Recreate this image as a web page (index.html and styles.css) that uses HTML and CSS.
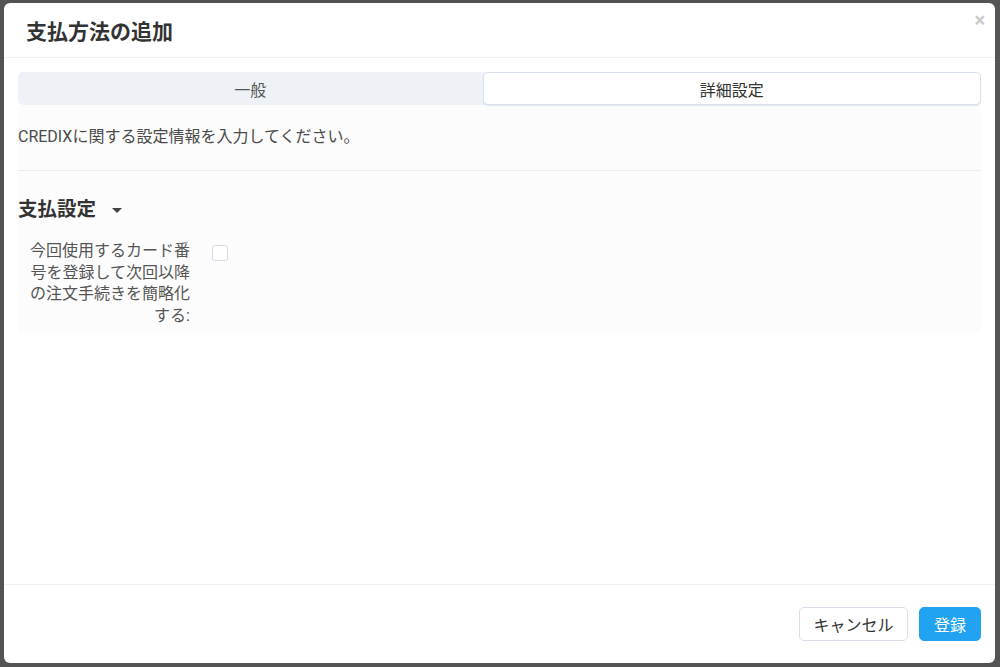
FILE: index.html
```html
<!DOCTYPE html>
<html lang="ja">
<head>
    <meta charset="UTF-8">
    <title>支払方法の追加</title>
    <link rel="stylesheet" href="styles.css">
</head>
<body>
    <div class="modal">
        <div class="modal-header">
            <h1 class="modal-title">支払方法の追加</h1>
            <span class="modal-close">&times;</span>
        </div>

        <div class="modal-body">
            <div class="tabs">
                <div class="tab">一般</div>
                <div class="tab active">詳細設定</div>
            </div>

            <div class="panel">
                <p class="description">CREDIXに関する設定情報を入力してください。</p>
                <hr class="divider">

                <h2 class="section-title">支払設定 <span class="caret"></span></h2>

                <div class="form-row">
                    <label class="form-label" for="saveCard">今回使用するカード番号を登録して次回以降の注文手続きを簡略化する:</label>
                    <input type="checkbox" class="form-check" id="saveCard">
                </div>
            </div>
        </div>

        <div class="modal-footer">
            <button class="btn btn-default">キャンセル</button>
            <button class="btn btn-primary">登録</button>
        </div>
    </div>
</body>
</html>
```

FILE: styles.css
```css
html, body {
    height: 100%;
}

body {
    margin: 0;
    padding: 3px 5px 4px 4px;
    box-sizing: border-box;
    background: #545454;
    font-family: Roboto, "Noto Sans CJK JP", sans-serif;
    color: #444;
}

.modal {
    height: 100%;
    background: #fff;
    border-radius: 6px;
    display: flex;
    flex-direction: column;
}

.modal-header {
    position: relative;
    height: 54px;
    padding: 0 22px;
    border-bottom: 1px solid #f0f0f0;
    display: flex;
    align-items: center;
}

.modal-title {
    margin: 0;
    font-size: 21px;
    font-weight: bold;
    color: #333;
}

.modal-close {
    position: absolute;
    top: 5px;
    right: 10px;
    font-size: 20px;
    font-weight: bold;
    color: #c8c8c8;
}

.modal-body {
    flex: 1;
    padding: 14px 14px 0 14px;
}

.tabs {
    display: flex;
    background: #eef2f7;
    border-radius: 5px;
    height: 33px;
}

.tab {
    flex: auto;
    display: flex;
    align-items: center;
    justify-content: center;
    font-size: 16px;
    color: #555;
    border-radius: 5px;
}

.tab.active {
    background: #fff;
    border: 1px solid #d9e1ee;
    box-shadow: 0 1px 1px rgba(150, 165, 190, 0.25);
    color: #333;
}

.panel {
    background: #fcfcfc;
    padding-bottom: 6px;
}

.description {
    margin: 0;
    padding: 22px 0 0 0;
    font-size: 16px;
    line-height: 20px;
    color: #4a4a4a;
}

.divider {
    border: none;
    border-top: 1px solid #ececec;
    margin: 23px 0 0 0;
}

.section-title {
    margin: 27px 0 0 0;
    font-size: 19.5px;
    font-weight: bold;
    color: #333;
    display: flex;
    align-items: center;
    line-height: 24px;
}

.caret {
    display: inline-block;
    width: 0;
    height: 0;
    margin-left: 16px;
    border-left: 5px solid transparent;
    border-right: 5px solid transparent;
    border-top: 5px solid #444;
}

.form-row {
    display: flex;
    align-items: flex-start;
    margin-top: 18px;
}

.form-label {
    width: 172px;
    text-align: right;
    font-size: 16px;
    line-height: 21.7px;
    color: #555;
}

.form-check {
    appearance: none;
    width: 16px;
    height: 16px;
    margin: 5px 0 0 22px;
    border: 1px solid #d5dbe6;
    border-radius: 3px;
    background: #fff;
}

.modal-footer {
    border-top: 1px solid #f0f0f0;
    height: 78px;
    padding: 0 14px;
    display: flex;
    align-items: center;
    justify-content: flex-end;
    gap: 11px;
}

.btn {
    height: 34px;
    padding: 0 12px;
    border-radius: 5px;
    font-family: Roboto, "Noto Sans CJK JP", sans-serif;
    font-size: 16px;
}

.btn-default {
    background: #fff;
    border: 1px solid #d9dfe9;
    color: #333;
    width: 109px;
}

.btn-primary {
    background: #22a3f1;
    border: 1px solid #22a3f1;
    color: #fff;
    width: 62px;
}
```
